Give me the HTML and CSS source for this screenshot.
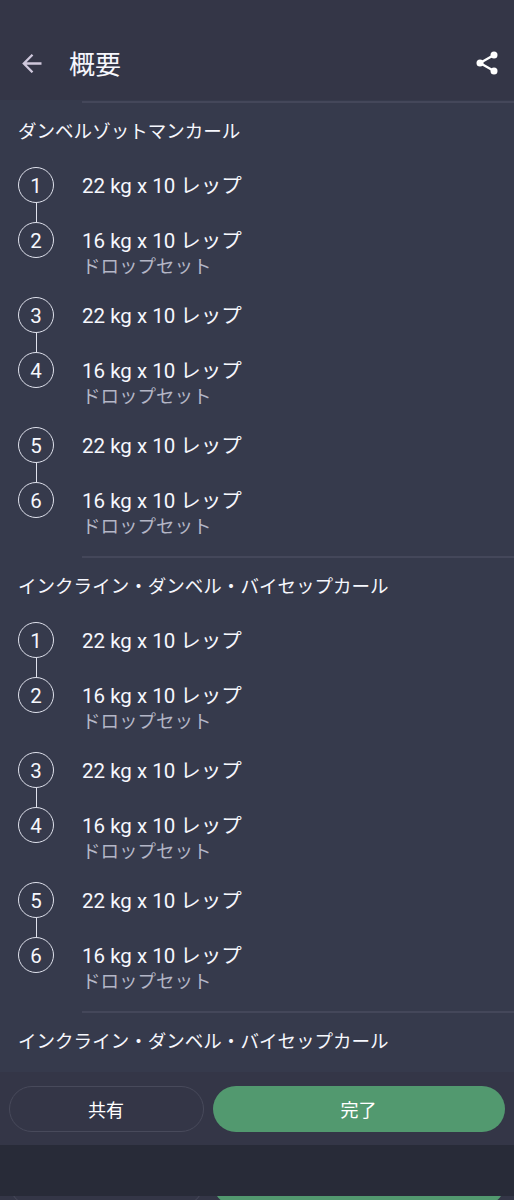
FILE: index.html
```
<!DOCTYPE html>
<html lang="ja">
<head>
<meta charset="utf-8">
<title>概要</title>
<link rel="stylesheet" href="styles.css">
</head>
<body>
<div class="screen">
  <header class="appbar">
    <svg class="back" viewBox="0 0 20 20"><path d="M10.5 1.7 1.8 10.5 10.5 19.3M1.8 10.5H19.5"/></svg>
    <h1>概要</h1>
    <svg class="share" viewBox="0 0 22 24"><path d="M18 4 4 12l14 8"/><circle cx="18" cy="4" r="3.5"/><circle cx="4" cy="12" r="3.5"/><circle cx="18" cy="20" r="3.5"/></svg>
  </header>
  <main class="list" id="list"></main>
  <footer class="actions">
    <button class="btn outline">共有</button>
    <button class="btn primary">完了</button>
  </footer>
  <div class="navbar"></div>
  <div class="peek">
    <span class="btn outline"></span>
    <span class="btn primary"></span>
  </div>
</div>
<script src="app.js"></script>
</body>
</html>
```

FILE: app.js
```
const exercises = [
  { name: 'ダンベルゾットマンカール', pairs: 3 },
  { name: 'インクライン・ダンベル・バイセップカール', pairs: 3 },
  { name: 'インクライン・ダンベル・バイセップカール', pairs: 0 }
];

const pair = (i) => `
  <div class="pair">
    <div class="set linked"><span class="num">${i * 2 + 1}</span><p class="load">22 kg x 10 レップ</p></div>
    <div class="set"><span class="num">${i * 2 + 2}</span><div><p class="load">16 kg x 10 レップ</p><p class="note">ドロップセット</p></div></div>
  </div>`;

document.getElementById('list').innerHTML = exercises.map((e) => `
  <section class="exercise">
    <hr>
    <h2>${e.name}</h2>
    ${Array.from({ length: e.pairs }, (_, i) => pair(i)).join('')}
  </section>`).join('');
```

FILE: styles.css
```
* { box-sizing: border-box; margin: 0; padding: 0; }

body {
  background: #282b38;
  color: #f6f7fd;
  font-family: Roboto, "Noto Sans CJK JP", sans-serif;
}

.screen { height: 1200px; display: flex; flex-direction: column; overflow: hidden; }

.appbar {
  flex: none;
  height: 100px;
  padding: 26px 16px 0 22px;
  display: flex;
  align-items: center;
  background: #343647;
}
.appbar h1 { margin-left: 27px; padding-top: 4px; font-size: 26px; line-height: 36px; font-weight: 400; flex: 1; }
.back { width: 20px; height: 20px; fill: none; stroke: #cfc8dc; stroke-width: 2.3; }
.share { width: 22px; height: 24px; fill: #fff; }
.share path { fill: none; stroke: #fff; stroke-width: 2.3; }

.list { flex: none; height: 972px; padding-top: 1px; background: #363a4c; overflow: hidden; }
.exercise { margin-bottom: -1px; }
.exercise hr { height: 2px; border: 0; margin-left: 82px; background: #44475a; }
.exercise h2 { height: 64px; padding-left: 18px; font-size: 18.55px; line-height: 58px; font-weight: 400; white-space: nowrap; }

.pair { height: 130px; }
.set { display: flex; gap: 28px; padding-left: 18px; }
.num {
  flex: none;
  width: 36px;
  height: 36px;
  border: 1px solid #dfe1ec;
  border-radius: 50%;
  font-size: 20.5px;
  line-height: 36px;
  text-align: center;
}
.linked { height: 55px; }
.linked .num { position: relative; }
.linked .num::after {
  content: "";
  position: absolute;
  top: 35px;
  left: 16.5px;
  width: 1px;
  height: 19px;
  background: #dfe1ec;
}
.load { font-size: 20.5px; line-height: 38px; white-space: nowrap; }
.note { font-size: 18.5px; line-height: 24px; margin-top: -5px; color: #b4b6c6; white-space: nowrap; }

.actions, .peek { display: flex; gap: 9px; padding: 0 9px; background: #343647; }
.actions { flex: none; height: 73px; padding-top: 14px; }
.btn {
  height: 46px;
  border: 0;
  border-radius: 23px;
  font: 400 18px/46px Roboto, "Noto Sans CJK JP", sans-serif;
  color: #fff;
  text-align: center;
}
.outline { width: 195px; border: 1px solid #484a5b; background: transparent; line-height: 44px; }
.primary { flex: 1; background: #52996f; }
.actions .btn { padding: 2px 1px 0 0; }
.navbar { flex: none; height: 51px; }
.peek { flex: none; height: 4px; overflow: hidden; align-items: flex-start; }
.peek .btn { margin-top: -36px; }
```
